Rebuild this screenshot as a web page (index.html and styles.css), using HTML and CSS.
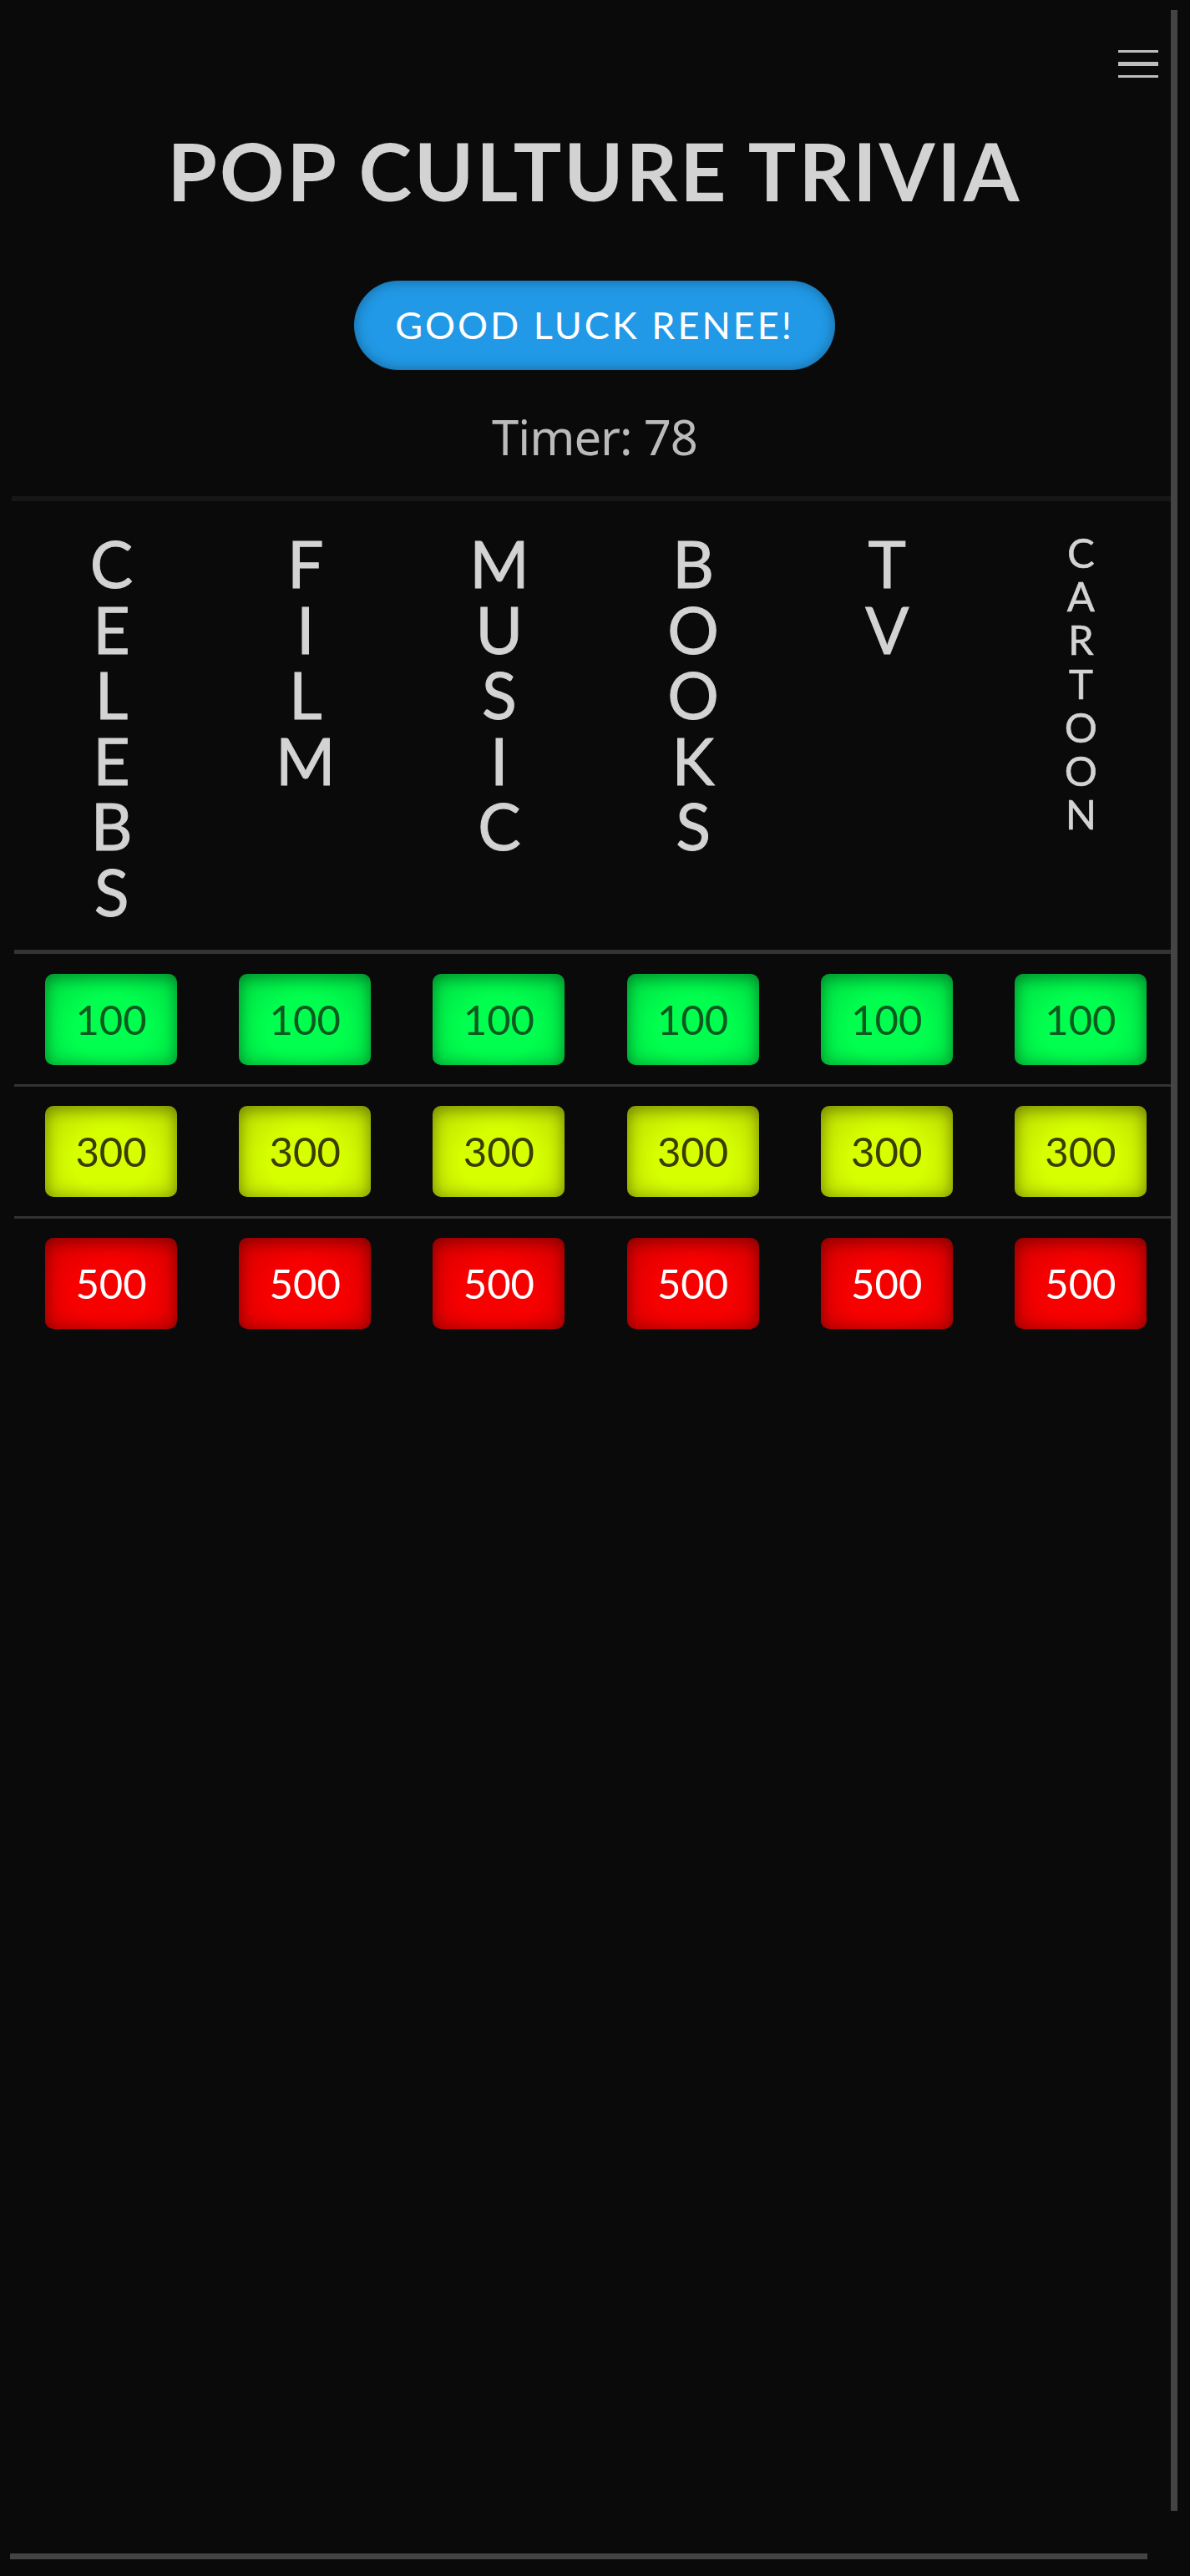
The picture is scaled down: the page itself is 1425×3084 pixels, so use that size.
FILE: index.html
```html
<!DOCTYPE html>
<html lang="en">
<head>
<meta charset="utf-8">
<title>Pop Culture Trivia</title>
<link rel="stylesheet" href="styles.css">
</head>
<body>
<div class="page">
  <button class="menu" aria-label="Menu"><span class="bar"></span><span class="bar mid"></span><span class="bar"></span></button>

  <header class="head">
    <h1 class="title">POP CULTURE TRIVIA</h1>
    <div class="greet">GOOD LUCK RENEE!</div>
    <div class="timer">Timer: 78</div>
  </header>
  <div class="rule"></div>

  <table class="board">
    <thead>
      <tr>
        <th><div class="cathead"><span class="cat">CELEBS</span></div></th>
        <th><div class="cathead"><span class="cat">FILM</span></div></th>
        <th><div class="cathead"><span class="cat">MUSIC</span></div></th>
        <th><div class="cathead"><span class="cat">BOOKS</span></div></th>
        <th><div class="cathead"><span class="cat">TV</span></div></th>
        <th><div class="cathead small"><span class="cat cat-sm">CARTOON</span></div></th>
      </tr>
    </thead>
    <tbody>
      <tr class="row first">
        <td><button class="tile green">100</button></td>
        <td><button class="tile green">100</button></td>
        <td><button class="tile green">100</button></td>
        <td><button class="tile green">100</button></td>
        <td><button class="tile green">100</button></td>
        <td><button class="tile green">100</button></td>
      </tr>
      <tr class="row">
        <td><button class="tile yellow">300</button></td>
        <td><button class="tile yellow">300</button></td>
        <td><button class="tile yellow">300</button></td>
        <td><button class="tile yellow">300</button></td>
        <td><button class="tile yellow">300</button></td>
        <td><button class="tile yellow">300</button></td>
      </tr>
      <tr class="row last">
        <td><button class="tile red">500</button></td>
        <td><button class="tile red">500</button></td>
        <td><button class="tile red">500</button></td>
        <td><button class="tile red">500</button></td>
        <td><button class="tile red">500</button></td>
        <td><button class="tile red">500</button></td>
      </tr>
    </tbody>
  </table>

  <div class="thumb-v"></div>
  <div class="thumb-h"></div>
</div>
</body>
</html>
```
FILE: styles.css
```css
* { box-sizing: border-box; }
html, body { margin: 0; padding: 0; background: #0a0a0a; }
body { font-family: Lato, "Noto Sans", sans-serif; color: #d3d3d3; }

.page { position: relative; width: 1425px; height: 3084px; overflow: hidden; }

.menu {
  position: absolute; left: 1339px; top: 60px; width: 48px;
  display: flex; flex-direction: column; gap: 11px;
  padding: 0; margin: 0; border: 0; background: none;
}
.menu .bar { display: block; height: 3px; background: #bdbdbd; }
.menu .bar.mid { height: 5px; }

.head {
  width: 1396px; margin-left: 14px; padding-top: 146px;
  display: flex; flex-direction: column; align-items: center;
}
.title {
  margin: 0; font-family: Lato, sans-serif; font-weight: 700;
  font-size: 96px; line-height: 1.2; letter-spacing: 3px; color: #d3d3d3;
}
.greet {
  margin-top: 75px; width: 576px; height: 107px; border-radius: 54px;
  background: #2199e6; box-shadow: inset 0 0 16px rgba(0,0,0,0.35);
  color: #fff; font-family: Lato, sans-serif; font-size: 45px; line-height: 1;
  letter-spacing: 3px;
  display: flex; align-items: center; justify-content: center;
}
.timer {
  margin-top: 40px; font-family: "Noto Sans", sans-serif; font-size: 58px;
  line-height: 79px; color: #bbbbbb; letter-spacing: -1px;
}
.rule { margin: 32px 0 0 14px; width: 1396px; height: 6px; background: #171717; }

.board {
  margin-left: 17px; width: 1393px; table-layout: fixed;
  border-collapse: separate; border-spacing: 0;
}
.board th { padding: 0; border-bottom: 5px solid #333; vertical-align: top; font-weight: 400; }
.cathead { height: 537px; padding-top: 28px; display: flex; justify-content: center; align-items: flex-start; }
.cathead.small { padding-top: 32px; }
.cat {
  writing-mode: vertical-lr; text-orientation: upright; text-align: start;
  font-family: Lato, sans-serif; font-size: 77px; line-height: 1;
  letter-spacing: -13.4px; color: #d3d3d3;
  -webkit-text-stroke: 1px #d3d3d3;
}
.cat-sm { font-size: 49px; letter-spacing: -5.8px; -webkit-text-stroke: 0.6px #d3d3d3; }

.board td { padding: 23px 0; text-align: center; border-bottom: 3px solid #333; }
.row.first td { padding-top: 24px; }
.row.last td { border-bottom: 0; }

.tile {
  display: block; margin: 0 auto; width: 158px; height: 109px;
  border: 0; border-radius: 10px; padding: 0;
  font-family: Lato, sans-serif; font-size: 49px; line-height: 1;
}
.tile.green {
  background: radial-gradient(ellipse at 50% 60%, #00ff4e 40%, #00d842 100%);
  color: #0c5a20;
  box-shadow: inset 0 0 20px rgba(0,0,0,0.32), inset 0 10px 14px rgba(0,0,0,0.12);
}
.tile.yellow {
  background: radial-gradient(ellipse at 50% 60%, #d6ff00 40%, #b8d600 100%);
  color: #3a3c00;
  box-shadow: inset 0 0 20px rgba(0,0,0,0.32), inset 0 10px 14px rgba(0,0,0,0.12);
}
.tile.red {
  background: radial-gradient(ellipse at 50% 60%, #f70000 40%, #d00000 100%);
  color: #ffffff;
  box-shadow: inset 0 0 20px rgba(0,0,0,0.32), inset 0 10px 14px rgba(0,0,0,0.12);
}

.thumb-v { position: absolute; left: 1402px; top: 12px; width: 8px; height: 2994px; background: #444; }
.thumb-h { position: absolute; left: 12px; top: 3057px; width: 1362px; height: 7px; background: #444; }
```
